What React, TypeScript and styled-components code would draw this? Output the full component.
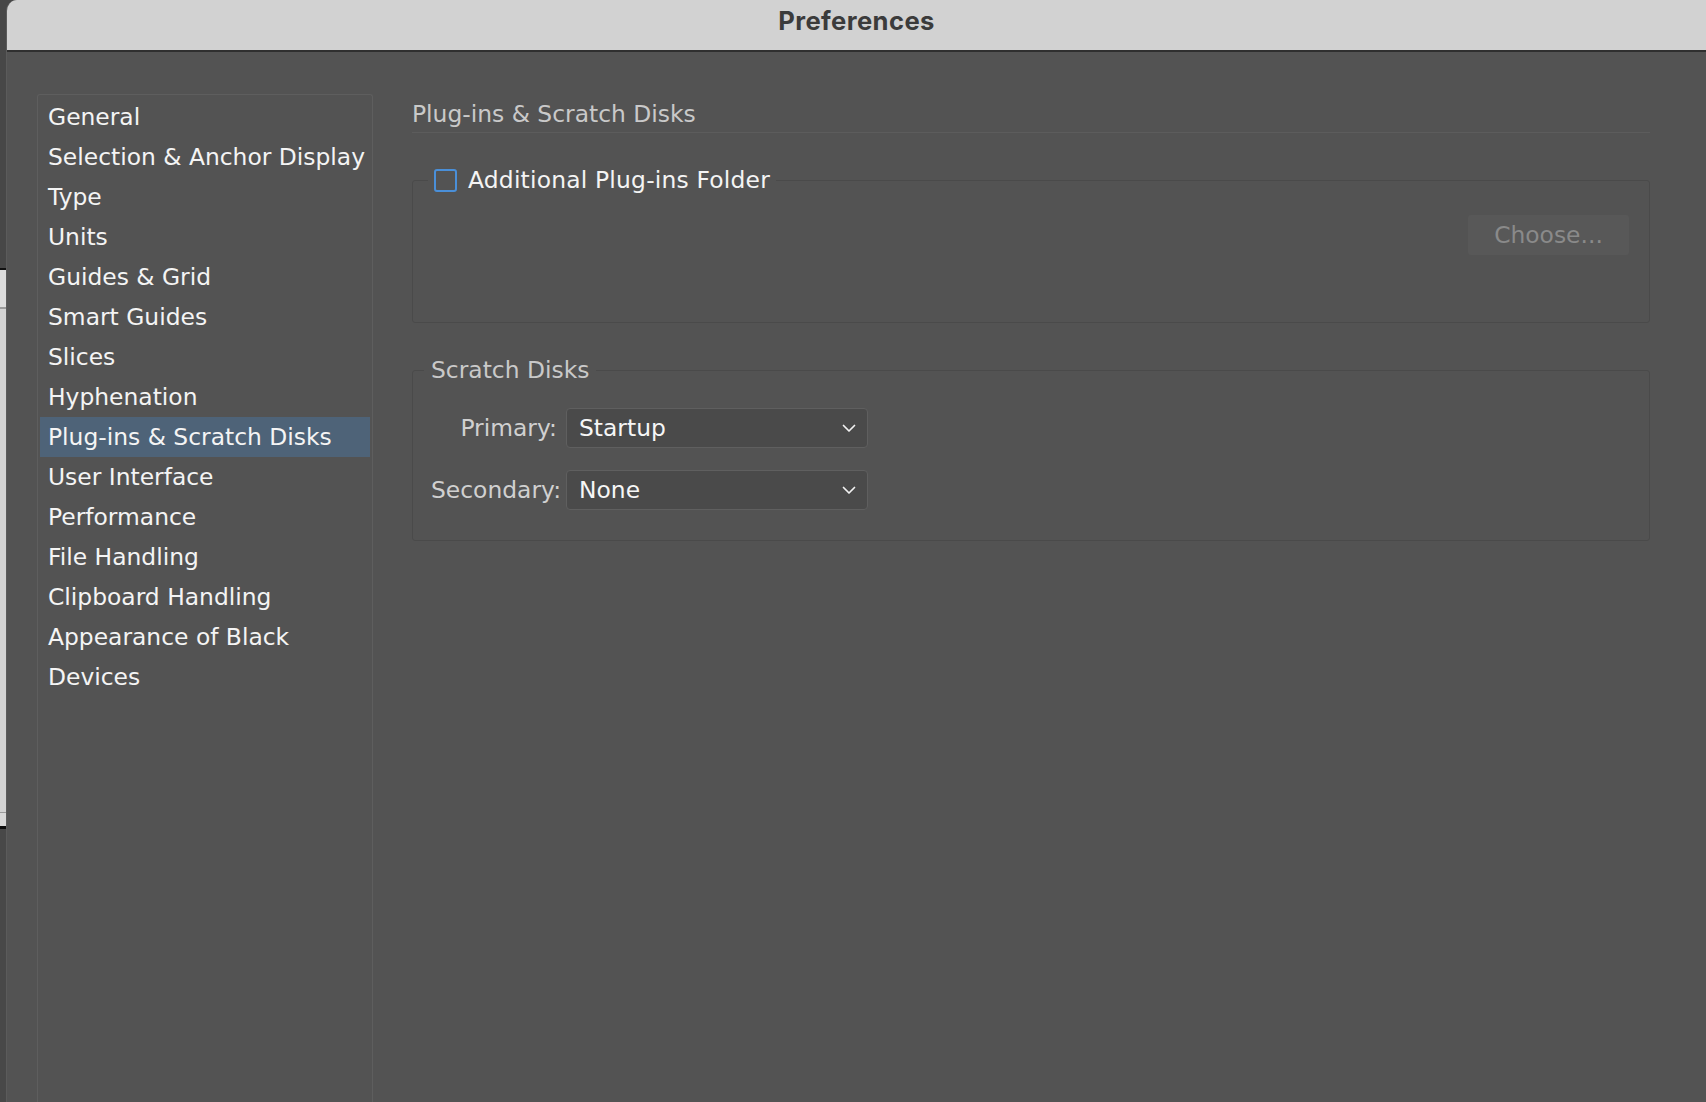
import React, { useState } from 'react';
import styled, { createGlobalStyle } from 'styled-components';

const GlobalStyle = createGlobalStyle`
  html, body {
    margin: 0;
    padding: 0;
    height: 100%;
    background: #474747;
    overflow: hidden;
  }
  #root {
    height: 100%;
  }
`;

const Screen = styled.div`
  display: flex;
  height: 100vh;
  font-family: 'DejaVu Sans', 'Liberation Sans', sans-serif;
`;

// strip of the window behind the dialog
const BehindStrip = styled.div`
  width: 6px;
  flex-shrink: 0;
  display: flex;
  flex-direction: column;
`;

const StripPiece = styled.div<{ $h?: number; $c: string }>`
  height: ${(p) => (p.$h ? `${p.$h}px` : 'auto')};
  flex: ${(p) => (p.$h ? '0 0 auto' : '1')};
  background: ${(p) => p.$c};
`;

const Window = styled.div`
  flex: 1;
  display: flex;
  flex-direction: column;
  background: #535353;
  border-left: 1px solid #5b5b5b;
  border-top-left-radius: 11px;
  overflow: hidden;
`;

const TitleBar = styled.div`
  height: 52px;
  flex-shrink: 0;
  box-sizing: border-box;
  padding-bottom: 8px;
  background: #d2d2d2;
  border-bottom: 2px solid #2f2f2f;
  display: flex;
  align-items: center;
  justify-content: center;
`;

const Title = styled.h1`
  margin: 0;
  font-family: Inter, 'Liberation Sans', sans-serif;
  font-size: 25.6px;
  font-weight: 700;
  letter-spacing: 0.4px;
  color: #3b3b3b;
  line-height: 1;
`;

const Body = styled.div`
  flex: 1;
  display: flex;
  padding: 42px 56px 0 30px;
  gap: 39px;
  min-height: 0;
`;

const Sidebar = styled.ul`
  list-style: none;
  margin: 0;
  width: 330px;
  flex-shrink: 0;
  padding: 2px 2px;
  border: 1px solid #5e5e5e;
  border-bottom: none;
  border-radius: 3px 3px 0 0;
`;

const NavItem = styled.li<{ $active?: boolean }>`
  height: 40px;
  display: flex;
  align-items: center;
  padding-left: 8px;
  font-size: 23.4px;
  color: #f4f4f4;
  white-space: nowrap;
  background: ${(p) => (p.$active ? '#4e6378' : 'transparent')};
  cursor: default;
`;

const Content = styled.div`
  flex: 1;
  display: flex;
  flex-direction: column;
  padding-top: 2px;
`;

const SectionHeader = styled.div`
  height: 36px;
  display: flex;
  align-items: center;
  font-size: 23.4px;
  color: #c9c9c9;
  border-bottom: 1px solid #5c5c5c;
`;

const Group = styled.fieldset<{ $top: number }>`
  margin: ${(p) => p.$top}px 0 0 0;
  min-width: 0;
  border: 1px solid #4a4a4a;
  border-radius: 3px;
  padding: 0;
`;

const Legend = styled.legend<{ $indent: number; $pad: number }>`
  margin-left: ${(p) => p.$indent}px;
  padding: 0 ${(p) => p.$pad}px;
  height: 30px;
  display: flex;
  align-items: center;
  gap: 11px;
  font-size: 23.4px;
  color: #c9c9c9;
`;

const CheckLabel = styled.label`
  display: flex;
  align-items: center;
  gap: 11px;
  color: #f4f4f4;
  letter-spacing: 0.2px;
  cursor: default;
`;

const CheckBox = styled.span<{ $checked: boolean }>`
  width: 19px;
  height: 19px;
  border: 2px solid #4a8fd8;
  border-radius: 3px;
  background: ${(p) => (p.$checked ? '#4a8fd8' : 'transparent')};
  display: inline-block;
`;

const ChooseRow = styled.div`
  display: flex;
  justify-content: flex-end;
  padding: 20px 20px 67px 0;
`;

const ChooseButton = styled.button`
  width: 161px;
  height: 40px;
  border: none;
  border-radius: 3px;
  background: #585858;
  color: #8a8a8a;
  font-family: inherit;
  font-size: 23.4px;
  padding: 0;
`;

const DiskGrid = styled.div`
  display: grid;
  grid-template-columns: 126px 302px;
  column-gap: 9px;
  row-gap: 22px;
  align-items: center;
  padding: 23px 0 30px 18px;
`;

const FieldLabel = styled.span`
  text-align: right;
  font-size: 23.4px;
  color: #d0d0d0;
  white-space: nowrap;
`;

const SelectBox = styled.div`
  height: 38px;
  border: 1px solid #5f5f5f;
  border-radius: 4px;
  background: #4a4a4a;
  display: flex;
  align-items: center;
  justify-content: space-between;
  padding: 0 11px 0 12px;
  font-size: 23.4px;
  color: #f6f6f6;
`;

const Chevron = () => (
  <svg width="14" height="9" viewBox="0 0 14 9">
    <path d="M1.5 1.5 L7 7 L12.5 1.5" fill="none" stroke="#f2f2f2" strokeWidth="1.7" strokeLinecap="round" strokeLinejoin="round" />
  </svg>
);

const navItems = [
  'General',
  'Selection & Anchor Display',
  'Type',
  'Units',
  'Guides & Grid',
  'Smart Guides',
  'Slices',
  'Hyphenation',
  'Plug-ins & Scratch Disks',
  'User Interface',
  'Performance',
  'File Handling',
  'Clipboard Handling',
  'Appearance of Black',
  'Devices',
];

function App() {
  const [active, setActive] = useState('Plug-ins & Scratch Disks');
  const [extraFolder, setExtraFolder] = useState(false);

  return (
    <Screen>
      <GlobalStyle />
      <BehindStrip>
        <StripPiece $h={268} $c="#474747" />
        <StripPiece $h={2} $c="#111" />
        <StripPiece $h={37} $c="#dcdcdc" />
        <StripPiece $h={2} $c="#9a9a9a" />
        <StripPiece $h={503} $c="#d3d3d3" />
        <StripPiece $h={1} $c="#9a9a9a" />
        <StripPiece $h={13} $c="#d8d8d8" />
        <StripPiece $h={3} $c="#0c0c0c" />
        <StripPiece $c="#484848" />
      </BehindStrip>
      <Window>
        <TitleBar>
          <Title>Preferences</Title>
        </TitleBar>
        <Body>
          <Sidebar>
            {navItems.map((item) => (
              <NavItem key={item} $active={item === active} onClick={() => setActive(item)}>
                {item}
              </NavItem>
            ))}
          </Sidebar>
          <Content>
            <SectionHeader>Plug-ins &amp; Scratch Disks</SectionHeader>
            <Group $top={32}>
              <Legend $indent={15} $pad={6}>
                <CheckLabel onClick={() => setExtraFolder(!extraFolder)}>
                  <CheckBox $checked={extraFolder} />
                  Additional Plug-ins Folder
                </CheckLabel>
              </Legend>
              <ChooseRow>
                <ChooseButton disabled={!extraFolder}>Choose...</ChooseButton>
              </ChooseRow>
            </Group>
            <Group $top={32}>
              <Legend $indent={11} $pad={7}>Scratch Disks</Legend>
              <DiskGrid>
                <FieldLabel>Primary:</FieldLabel>
                <SelectBox>
                  Startup
                  <Chevron />
                </SelectBox>
                <FieldLabel>Secondary:</FieldLabel>
                <SelectBox>
                  None
                  <Chevron />
                </SelectBox>
              </DiskGrid>
            </Group>
          </Content>
        </Body>
      </Window>
    </Screen>
  );
}

export default App;
